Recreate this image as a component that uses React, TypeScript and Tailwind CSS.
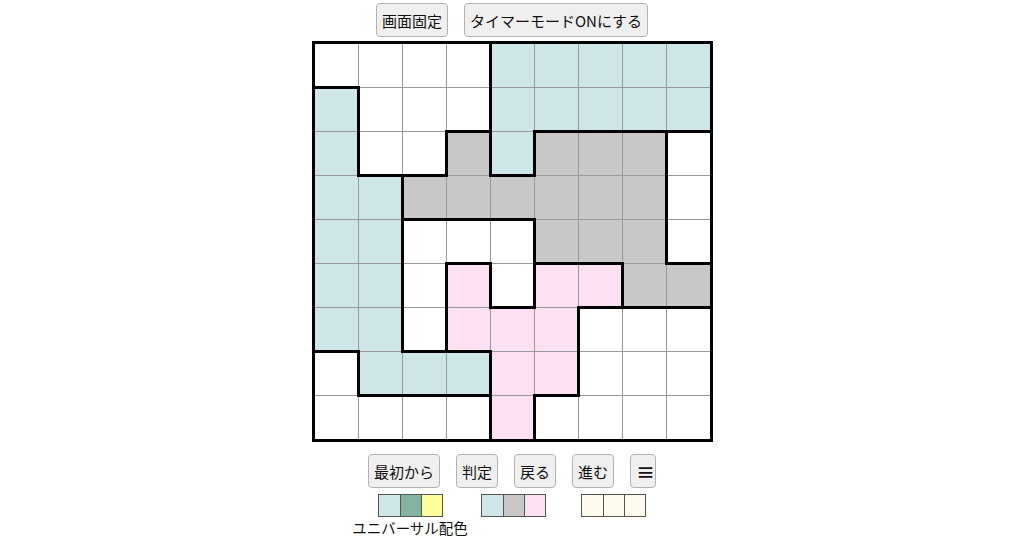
import React from "react";

const board = [
  "WWWWBBBBB",
  "BWWWBBBBB",
  "BWWGBGGGW",
  "BBGGGGGGW",
  "BBWWWGGGW",
  "BBWPWPPGG",
  "BBWPPPWWW",
  "WBBBPPWWW",
  "WWWWPWWWW",
];

const cellColor: Record<string, string> = {
  W: "bg-white",
  B: "bg-[#cfe6e8]",
  G: "bg-[#c8c8c8]",
  P: "bg-[#fde0f2]",
};

const PITCH = 44;
const SIZE = PITCH * 9 - 1;

// thick lines wherever two neighbouring cells have a different colour
const regionLines = () => {
  const lines: { x1: number; y1: number; x2: number; y2: number }[] = [];
  for (let r = 0; r < 9; r++) {
    for (let c = 0; c < 9; c++) {
      if (c > 0 && board[r][c] !== board[r][c - 1]) {
        const x = c * PITCH - 0.5;
        lines.push({ x1: x, y1: r * PITCH - 0.5, x2: x, y2: (r + 1) * PITCH - 0.5 });
      }
      if (r > 0 && board[r][c] !== board[r - 1][c]) {
        const y = r * PITCH - 0.5;
        lines.push({ x1: c * PITCH - 0.5, y1: y, x2: (c + 1) * PITCH - 0.5, y2: y });
      }
    }
  }
  return lines;
};

const Button = ({ children, className = "" }: { children: React.ReactNode; className?: string }) => (
  <button
    type="button"
    className={`h-[34px] px-[5px] bg-[#efefef] border border-[#b3b3b3] rounded-[4px] text-[15px] leading-none text-[#111] ${className}`}
  >
    {children}
  </button>
);

const Swatches = ({ colors }: { colors: string[] }) => (
  <div className="flex border border-[#555]">
    {colors.map((c, i) => (
      <div key={i} className={`w-[21px] h-[21px] ${c} ${i > 0 ? "border-l border-[#555]" : ""}`} />
    ))}
  </div>
);

export default function App() {
  const lines = regionLines();

  return (
    <div
      className="w-[1024px] h-[538px] bg-white flex flex-col items-center pt-[3px] overflow-hidden"
      style={{ fontFamily: '"Noto Sans CJK JP", "Noto Sans", sans-serif' }}
    >
      <div className="flex gap-[16px]">
        <Button className="h-[33px]">画面固定</Button>
        <Button className="h-[33px]">タイマーモードONにする</Button>
      </div>

      <div className="mt-[4px] border-[3px] border-black">
        <div className="relative bg-[#999]" style={{ width: SIZE, height: SIZE }}>
          <div className="grid grid-cols-[repeat(9,43px)] grid-rows-[repeat(9,43px)] gap-px">
            {board.flatMap((row, r) =>
              row.split("").map((ch, c) => <div key={`${r}-${c}`} className={cellColor[ch]} />)
            )}
          </div>
          <svg className="absolute inset-0" width={SIZE} height={SIZE} viewBox={`0 0 ${SIZE} ${SIZE}`}>
            {lines.map((l, i) => (
              <line key={i} {...l} stroke="black" strokeWidth={3} strokeLinecap="square" />
            ))}
          </svg>
        </div>
      </div>

      <div className="mt-[12px] flex gap-[16px]">
        <Button>最初から</Button>
        <Button>判定</Button>
        <Button>戻る</Button>
        <Button>進む</Button>
        <Button className="w-[26px] px-0 text-[19px] font-bold">≡</Button>
      </div>

      <div className="mt-[6px] flex items-start pr-[26px]">
        <div className="w-[115px] flex flex-col items-center">
          <Swatches colors={["bg-[#cfe6e8]", "bg-[#82b59f]", "bg-[#ffff99]"]} />
          <span className="mt-[3px] text-[14.5px] leading-[16px] text-[#111] whitespace-nowrap">ユニバーサル配色</span>
        </div>
        <div className="ml-[13px]">
          <Swatches colors={["bg-[#cfe6e8]", "bg-[#c8c8c8]", "bg-[#fde0f2]"]} />
        </div>
        <div className="ml-[35px]">
          <Swatches colors={["bg-[#fffaee]", "bg-[#fffaee]", "bg-[#fffaee]"]} />
        </div>
      </div>
    </div>
  );
}
